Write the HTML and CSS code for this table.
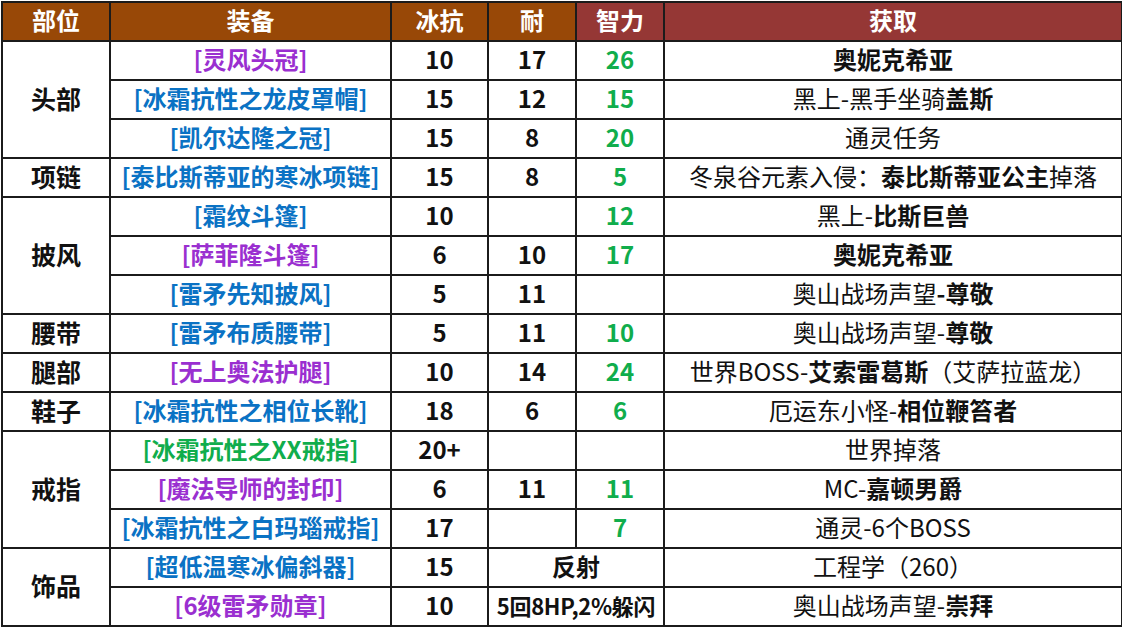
FILE: index.html
```html
<!DOCTYPE html>
<html lang="zh-CN">
<head>
<meta charset="utf-8">
<title>冰抗装备</title>
<link rel="stylesheet" href="styles.css">
</head>
<body>
<table class="gear">
  <colgroup>
    <col class="c-slot">
    <col class="c-item">
    <col class="c-frost">
    <col class="c-sta">
    <col class="c-int">
    <col class="c-src">
  </colgroup>
  <thead>
    <tr>
      <th class="h-brown">部位</th>
      <th class="h-brown">装备</th>
      <th class="h-brown">冰抗</th>
      <th class="h-brown">耐</th>
      <th class="h-red">智力</th>
      <th class="h-red">获取</th>
    </tr>
  </thead>
  <tbody>
    <tr>
      <td class="slot" rowspan="3">头部</td>
      <td class="item epic">[灵风头冠]</td>
      <td class="num">10</td><td class="num">17</td><td class="num int">26</td>
      <td class="src"><b>奥妮克希亚</b></td>
    </tr>
    <tr>
      <td class="item rare">[冰霜抗性之龙皮罩帽]</td>
      <td class="num">15</td><td class="num">12</td><td class="num int">15</td>
      <td class="src">黑上-黑手坐骑<b>盖斯</b></td>
    </tr>
    <tr>
      <td class="item rare">[凯尔达隆之冠]</td>
      <td class="num">15</td><td class="num">8</td><td class="num int">20</td>
      <td class="src">通灵任务</td>
    </tr>
    <tr>
      <td class="slot">项链</td>
      <td class="item rare">[泰比斯蒂亚的寒冰项链]</td>
      <td class="num">15</td><td class="num">8</td><td class="num int">5</td>
      <td class="src">冬泉谷元素入侵：<b>泰比斯蒂亚公主</b>掉落</td>
    </tr>
    <tr>
      <td class="slot" rowspan="3">披风</td>
      <td class="item rare">[霜纹斗篷]</td>
      <td class="num">10</td><td class="num"></td><td class="num int">12</td>
      <td class="src">黑上-<b>比斯巨兽</b></td>
    </tr>
    <tr>
      <td class="item epic">[萨菲隆斗篷]</td>
      <td class="num">6</td><td class="num">10</td><td class="num int">17</td>
      <td class="src"><b>奥妮克希亚</b></td>
    </tr>
    <tr>
      <td class="item rare">[雷矛先知披风]</td>
      <td class="num">5</td><td class="num">11</td><td class="num int"></td>
      <td class="src">奥山战场声望<b>-尊敬</b></td>
    </tr>
    <tr>
      <td class="slot">腰带</td>
      <td class="item rare">[雷矛布质腰带]</td>
      <td class="num">5</td><td class="num">11</td><td class="num int">10</td>
      <td class="src">奥山战场声望-<b>尊敬</b></td>
    </tr>
    <tr>
      <td class="slot">腿部</td>
      <td class="item epic">[无上奥法护腿]</td>
      <td class="num">10</td><td class="num">14</td><td class="num int">24</td>
      <td class="src">世界BOSS-<b>艾索雷葛斯</b>（艾萨拉蓝龙）</td>
    </tr>
    <tr>
      <td class="slot">鞋子</td>
      <td class="item rare">[冰霜抗性之相位长靴]</td>
      <td class="num">18</td><td class="num">6</td><td class="num int">6</td>
      <td class="src">厄运东小怪-<b>相位鞭笞者</b></td>
    </tr>
    <tr>
      <td class="slot" rowspan="3">戒指</td>
      <td class="item uncommon">[冰霜抗性之XX戒指]</td>
      <td class="num">20+</td><td class="num"></td><td class="num int"></td>
      <td class="src">世界掉落</td>
    </tr>
    <tr>
      <td class="item epic">[魔法导师的封印]</td>
      <td class="num">6</td><td class="num">11</td><td class="num int">11</td>
      <td class="src">MC-<b>嘉顿男爵</b></td>
    </tr>
    <tr>
      <td class="item rare">[冰霜抗性之白玛瑙戒指]</td>
      <td class="num">17</td><td class="num"></td><td class="num int">7</td>
      <td class="src">通灵-6个BOSS</td>
    </tr>
    <tr>
      <td class="slot" rowspan="2">饰品</td>
      <td class="item rare">[超低温寒冰偏斜器]</td>
      <td class="num">15</td><td class="num" colspan="2">反射</td>
      <td class="src">工程学（260）</td>
    </tr>
    <tr>
      <td class="item epic">[6级雷矛勋章]</td>
      <td class="num">10</td><td class="num small" colspan="2">5回8HP,2%躲闪</td>
      <td class="src">奥山战场声望-<b>崇拜</b></td>
    </tr>
  </tbody>
</table>
</body>
</html>
```

FILE: styles.css
```css
html, body {
  margin: 0;
  padding: 0;
  background: #ffffff;
}

body {
  font-family: "Noto Sans CJK SC", "Noto Sans", sans-serif;
  font-size: 24px;
  color: #111111;
}

.gear {
  border-collapse: collapse;
  table-layout: fixed;
  width: 1120px;
  margin: 1px 0 0 1px;
}

.c-slot { width: 108px; }
.c-item { width: 281px; }
.c-frost { width: 97px; }
.c-sta { width: 88px; }
.c-int { width: 88px; }
.c-src { width: 458px; }

.gear tr {
  height: 39px;
}

.gear th,
.gear td {
  border: 2px solid #1b1b1b;
  padding: 0 0 3px;
  text-align: center;
  vertical-align: middle;
  line-height: 1;
  white-space: nowrap;
  overflow: hidden;
}

.gear th {
  color: #ffffff;
  font-weight: 700;
  font-size: 24px;
}

.h-brown { background: #984807; }
.h-red { background: #953735; }

.slot {
  font-weight: 700;
  font-size: 25px;
}

.item {
  font-weight: 700;
}

.epic { color: #9a2fd0; }
.rare { color: #0a72c4; }
.uncommon { color: #10ad4c; }

.num {
  font-weight: 700;
}

.int { color: #10ad4c; }

.small {
  font-size: 22px;
  letter-spacing: -0.3px;
}

.src {
  font-weight: 400;
}

.src b {
  font-weight: 700;
}
```
